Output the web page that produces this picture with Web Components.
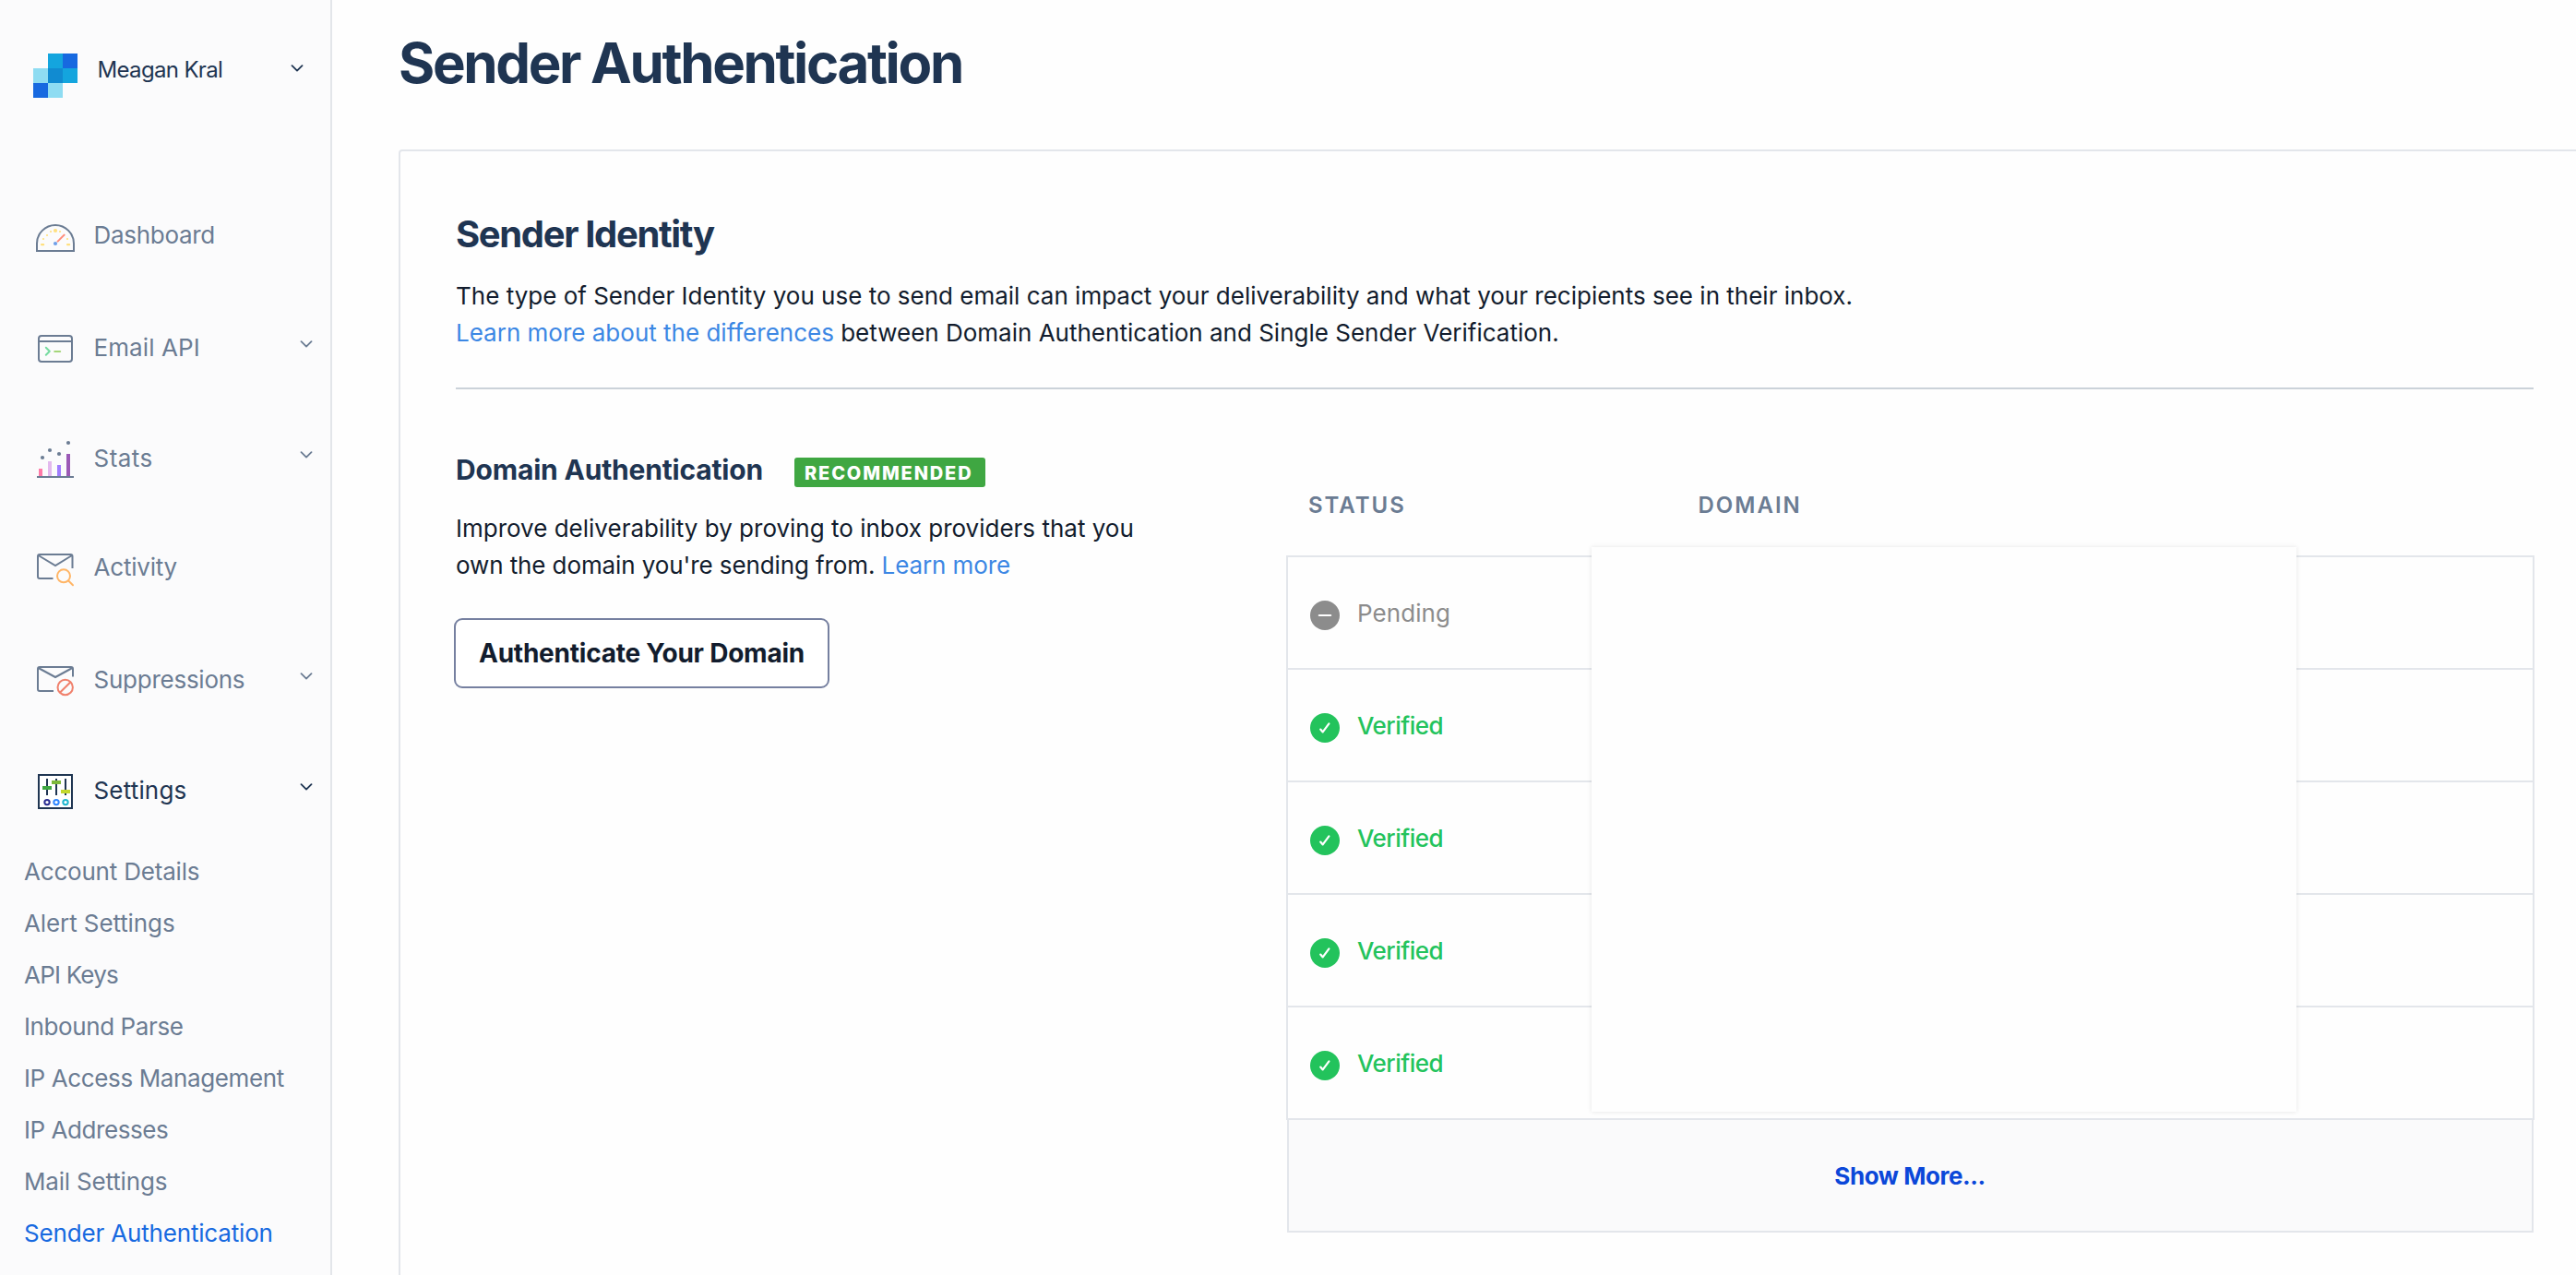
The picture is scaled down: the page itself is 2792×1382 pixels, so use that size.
<!DOCTYPE html>
<html lang="en">
<head>
  <meta charset="utf-8">
  <title>Sender Authentication</title>
  <style>
    body {
      margin: 0;
      font-family: Inter, "Liberation Sans", sans-serif;
      font-size: 26px;
      color: #121c2d;
      background: #fefefe;
    }
  </style>
</head>
<body>
<app-shell>
  <side-bar slot="sidebar" user="Meagan Kral">
    <nav-item icon="dashboard" tracking="-0.3">Dashboard</nav-item>
    <nav-item icon="email" tracking="0.1" expandable>Email API</nav-item>
    <nav-item icon="stats" tracking="0.45" expandable>Stats</nav-item>
    <nav-item icon="activity" tracking="-0.2">Activity</nav-item>
    <nav-item icon="suppressions" tracking="-0.25" expandable>Suppressions</nav-item>
    <nav-item icon="settings" tracking="0.17" expandable active>Settings</nav-item>
    <sub-link tracking="-0.2">Account Details</sub-link>
    <sub-link tracking="-0.1">Alert Settings</sub-link>
    <sub-link tracking="-0.8">API Keys</sub-link>
    <sub-link tracking="-0.4">Inbound Parse</sub-link>
    <sub-link tracking="-0.38">IP Access Management</sub-link>
    <sub-link tracking="-0.43">IP Addresses</sub-link>
    <sub-link tracking="-0.18">Mail Settings</sub-link>
    <sub-link tracking="-0.17" active>Sender Authentication</sub-link>
  </side-bar>
  <page-title>Sender Authentication</page-title>
  <identity-card heading="Sender Identity">
    <span slot="intro">The type of Sender Identity you use to send email can impact your deliverability and what your recipients see in their inbox.<br><text-link>Learn more about the differences</text-link> between Domain Authentication and Single Sender Verification.</span>
    <auth-section slot="details" heading="Domain Authentication" tag="Recommended">
      <span>Improve deliverability by proving to inbox providers that you</span>
      <span slot="second">own the domain you're sending from. <text-link>Learn more</text-link></span>
      <outline-button slot="action">Authenticate Your Domain</outline-button>
    </auth-section>
    <domain-table slot="table">
      <status-row state="pending">Pending</status-row>
      <status-row state="verified">Verified</status-row>
      <status-row state="verified">Verified</status-row>
      <status-row state="verified">Verified</status-row>
      <status-row state="verified">Verified</status-row>
      <span slot="more">Show More...</span>
    </domain-table>
  </identity-card>
</app-shell>

<script>
const CHEVRON = '<svg class="chevron" width="14" height="8" viewBox="0 0 14 8" fill="none" stroke="currentColor" stroke-width="1.8" stroke-linecap="round" stroke-linejoin="round"><path d="M1.5 1.2L7 6.6L12.5 1.2"/></svg>';

const NAV_ICONS = {
  dashboard: `
    <path d="M2 36V28A20 20 0 0 1 42 28V36Z" fill="none" stroke="#6b7c93" stroke-width="2"/>
    <g fill="#ffe07f">
      <circle cx="22" cy="14" r="2.1"/>
      <circle cx="17" cy="15" r="1.1"/><circle cx="27" cy="15" r="1.1"/>
      <circle cx="13" cy="19" r="1.1"/><circle cx="9" cy="23" r="1.1"/><circle cx="35" cy="23" r="1.1"/>
      <rect x="6" y="28" width="4.2" height="2.2" rx="1"/><rect x="34" y="28" width="4.2" height="2.2" rx="1"/>
    </g>
    <path d="M24.6 25.6L31.6 18.6" stroke="#ff8d7a" stroke-width="2" stroke-linecap="round"/>
    <circle cx="22" cy="28" r="2.1" fill="#6f9fe8"/>`,
  email: `
    <g fill="none" stroke-width="2">
      <rect x="4" y="8" width="36" height="28" rx="3" stroke="#6b7c93"/>
      <path d="M4 14H40" stroke="#6b7c93"/>
      <path d="M11.8 20.8L15.8 24.8L11.8 28.8" stroke="#76dba0" stroke-linecap="round" stroke-linejoin="round"/>
      <path d="M21.2 25H27.2" stroke="#a5d67a" stroke-linecap="round"/>
    </g>`,
  stats: `
    <rect x="4" y="32" width="4" height="8" fill="#ff7aa8"/>
    <rect x="14" y="24" width="4" height="16" fill="#e3b9ee"/>
    <rect x="24" y="28" width="4" height="12" fill="#a07dff"/>
    <rect x="34" y="16" width="4" height="24" fill="#9b59b6"/>
    <g fill="#6b7c93">
      <rect x="2" y="40" width="40" height="2"/>
      <circle cx="8" cy="20" r="2.1"/><circle cx="16" cy="12" r="2.1"/>
      <circle cx="26" cy="16" r="2.1"/><circle cx="36" cy="4" r="2.1"/>
    </g>`,
  activity: `
    <g fill="none" stroke-width="2">
      <path d="M19.5 31H5a2 2 0 0 1-2-2V7a2 2 0 0 1 2-2H38.5a2 2 0 0 1 2 2V20M3.6 6L22 17L40 6" stroke="#6b7c93"/>
      <g stroke="#ffb566"><circle cx="31" cy="28.3" r="7"/><path d="M36.2 33.5L41 38.2" stroke-linecap="round"/></g>
    </g>`,
  suppressions: `
    <g fill="none" stroke-width="2">
      <path d="M20 33H5a2 2 0 0 1-2-2V9a2 2 0 0 1 2-2H39a2 2 0 0 1 2 2V17.5M3.6 8L22 18L40.4 8" stroke="#6b7c93"/>
      <g stroke="#f0806c"><circle cx="32.7" cy="29" r="8.2"/><path d="M26.9 34.8L38.5 23.2"/></g>
    </g>`,
  settings: `
    <rect x="4" y="4" width="36" height="36" fill="#fff" stroke="#1f3552" stroke-width="2"/>
    <path d="M13 8V26M23 8V26M33 8V26" stroke="#1f3552" stroke-width="2"/>
    <rect x="8" y="16" width="10" height="4" fill="#3fa742"/>
    <rect x="18" y="10" width="10" height="4" fill="#7cb83a"/>
    <rect x="28" y="20" width="10" height="4" fill="#c3d82d"/>
    <g fill="none" stroke-width="2">
      <circle cx="13" cy="33.6" r="2.7" stroke="#2c2f92"/>
      <circle cx="23" cy="33.6" r="2.7" stroke="#2f86ff"/>
      <circle cx="33" cy="33.6" r="2.7" stroke="#1fb6cf"/>
    </g>`,
};

const STATUS_ICONS = {
  pending: '<circle cx="16" cy="16" r="16" fill="#8c8c8c"/><path d="M9.8 16H22.2" stroke="#fff" stroke-width="2.2" stroke-linecap="round"/>',
  verified: '<circle cx="16" cy="16" r="16" fill="#23c35c"/><path d="M11.2 17.6L13.7 20.4L20.4 11.4" fill="none" stroke="#fff" stroke-width="2.2" stroke-linecap="round" stroke-linejoin="round"/>',
};

class BaseElement extends HTMLElement {
  constructor() {
    super();
    this.attachShadow({ mode: 'open' });
  }

  connectedCallback() {
    this.shadowRoot.innerHTML = this.render();
  }
}

class AppShell extends BaseElement {
  render() {
    return `
      <style>
        :host {
          display: flex;
          height: 1382px;
          overflow: hidden;
        }
        main {
          flex: 1;
          min-width: 0;
          display: flex;
          flex-direction: column;
          padding: 32px 0 0 72px;
        }
      </style>
      <slot name="sidebar"></slot>
      <main><slot></slot></main>`;
  }
}

class SideBar extends BaseElement {
  render() {
    return `
      <style>
        :host {
          display: block;
          box-sizing: border-box;
          width: 360px;
          flex-shrink: 0;
          background: #fbfbfc;
          border-right: 2px solid #e3e6ea;
        }
        header {
          display: flex;
          align-items: flex-start;
          height: 140px;
          padding: 58px 29px 0 36px;
          color: #1f3552;
        }
        .name {
          flex: 1;
          margin-left: 21.5px;
          font-size: 24px;
          line-height: 35px;
          letter-spacing: -0.66px;
        }
        .chevron {
          margin-top: 12px;
        }
      </style>
      <header>
        <svg width="48" height="48" viewBox="0 0 48 48" shape-rendering="crispEdges">
          <path d="M0 16H16V32H0ZM16 32H32V48H16Z" fill="#8edcf2"/>
          <path d="M16 0H32V16H16ZM32 16H48V32H32Z" fill="#14a5de"/>
          <path d="M32 0H48V16H32ZM0 32H16V48H0Z" fill="#1769e0"/>
          <path d="M16 16H32V32H16Z" fill="#118bd1"/>
        </svg>
        <span class="name">${this.getAttribute('user')}</span>
        ${CHEVRON}
      </header>
      <nav><slot></slot></nav>`;
  }
}

class NavItem extends BaseElement {
  render() {
    return `
      <style>
        :host {
          display: flex;
          align-items: center;
          height: 120px;
          padding: 0 19px 0 38px;
          color: #6b7c93;
        }
        :host([active]) {
          color: #1f3552;
        }
        .label {
          flex: 1;
          margin-left: 19.5px;
          line-height: 31px;
          padding-bottom: 7px;
          letter-spacing: ${this.getAttribute('tracking')}px;
        }
        :host([expandable]) .label {
          padding-bottom: 3px;
        }
        .chevron {
          margin-bottom: 11px;
        }
      </style>
      <svg width="44" height="44" viewBox="0 0 44 44">${NAV_ICONS[this.getAttribute('icon')]}</svg>
      <span class="label"><slot></slot></span>
      ${this.hasAttribute('expandable') ? CHEVRON : ''}`;
  }
}

class SubLink extends BaseElement {
  render() {
    return `
      <style>
        :host {
          display: block;
          padding-left: 26px;
          margin-bottom: 3px;
          line-height: 53px;
          color: #6b7c93;
          letter-spacing: ${this.getAttribute('tracking')}px;
        }
        :host([active]) {
          color: #1769e0;
        }
      </style>
      <slot></slot>`;
  }
}

class PageTitle extends BaseElement {
  render() {
    return `
      <style>
        :host {
          display: block;
          margin-bottom: 58px;
        }
        h1 {
          margin: 0;
          font-size: 60px;
          font-weight: 700;
          line-height: 72px;
          letter-spacing: -2.37px;
          color: #1f3552;
        }
      </style>
      <h1><slot></slot></h1>`;
  }
}

class TextLink extends BaseElement {
  render() {
    return `
      <style>
        :host {
          color: #3c87e4;
          cursor: pointer;
        }
      </style>
      <slot></slot>`;
  }
}

class IdentityCard extends BaseElement {
  render() {
    return `
      <style>
        :host {
          display: block;
          flex: 1;
          box-sizing: border-box;
          margin-right: -17px;
          padding: 65px 60px 0;
          border: 2px solid #e3e6eb;
          border-bottom: 0;
          border-radius: 4px 4px 0 0;
        }
        h2 {
          margin: 0 0 23px;
          font-size: 40px;
          font-weight: 700;
          line-height: 49px;
          letter-spacing: -1.36px;
          color: #1f3552;
        }
        p {
          margin: 0 0 39px;
          line-height: 40px;
        }
        hr {
          margin: 0 1px 0 0;
          border: 0;
          height: 2px;
          background: #cbd2d9;
        }
        .columns {
          display: grid;
          grid-template-columns: 1fr 1353px;
        }
      </style>
      <h2>${this.getAttribute('heading')}</h2>
      <p><slot name="intro"></slot></p>
      <hr>
      <div class="columns">
        <slot name="details"></slot>
        <slot name="table"></slot>
      </div>`;
  }
}

class AuthSection extends BaseElement {
  render() {
    return `
      <style>
        :host {
          display: block;
          padding-top: 69px;
        }
        .title {
          display: flex;
          align-items: flex-start;
          height: 36px;
          margin-bottom: 26px;
        }
        h3 {
          margin: 0;
          width: 367px;
          font-size: 30px;
          font-weight: 700;
          line-height: 36px;
          letter-spacing: -0.18px;
          color: #1f3552;
        }
        .tag {
          box-sizing: border-box;
          width: 207px;
          height: 32px;
          margin-top: 5px;
          padding: 1px 0 0 11px;
          border-radius: 3px;
          background: #3fa742;
          color: #fff;
          font-size: 20px;
          font-weight: 800;
          line-height: 32px;
          letter-spacing: 1.85px;
          text-transform: uppercase;
        }
        .text {
          margin-bottom: 37px;
          line-height: 40px;
        }
        .text div + div {
          letter-spacing: -0.1px;
        }
      </style>
      <div class="title">
        <h3>${this.getAttribute('heading')}</h3>
        <span class="tag">${this.getAttribute('tag')}</span>
      </div>
      <div class="text">
        <div><slot></slot></div>
        <div><slot name="second"></slot></div>
      </div>
      <slot name="action"></slot>`;
  }
}

class OutlineButton extends BaseElement {
  render() {
    return `
      <style>
        :host {
          display: block;
          margin-left: -2px;
        }
        button {
          display: block;
          box-sizing: border-box;
          width: 407px;
          height: 76px;
          padding: 0;
          border: 2px solid #7680a0;
          border-radius: 9px;
          background: #fff;
          color: #121c2d;
          font: 700 28px Inter, sans-serif;
          letter-spacing: -0.23px;
        }
      </style>
      <button><slot></slot></button>`;
  }
}

class DomainTable extends BaseElement {
  render() {
    return `
      <style>
        :host {
          display: block;
          position: relative;
          padding-top: 111px;
        }
        .head {
          display: grid;
          grid-template-columns: 422.5px 1fr;
          padding-left: 24px;
          margin-bottom: 40px;
          font-size: 24px;
          font-weight: 600;
          line-height: 29px;
          letter-spacing: 2px;
          color: #6b7c93;
        }
        .rows {
          border: 2px solid #e3e6eb;
          border-bottom: 0;
        }
        .more {
          display: flex;
          align-items: center;
          justify-content: center;
          height: 120px;
          margin: 0 1px;
          padding-right: 1px;
          border: 2px solid #e3e6eb;
          border-top: 0;
          background: #fafafb;
          color: #0b47d9;
          font-weight: 700;
          letter-spacing: -0.45px;
        }
        /* blank panel that hides the domain names */
        .cover {
          position: absolute;
          left: 331px;
          top: 171px;
          width: 764px;
          height: 612px;
          background: #fefefe;
          box-shadow: 0 0 5px rgba(0, 0, 0, 0.1);
        }
      </style>
      <div class="head"><span>STATUS</span><span>DOMAIN</span></div>
      <div class="rows"><slot></slot></div>
      <div class="more"><slot name="more"></slot></div>
      <div class="cover"></div>`;
  }
}

class StatusRow extends BaseElement {
  render() {
    return `
      <style>
        :host {
          display: flex;
          align-items: center;
          height: 120px;
          padding-left: 23.5px;
          border-bottom: 2px solid #e3e6eb;
          color: #8c8c8c;
          letter-spacing: 0.07px;
        }
        :host([state="verified"]) {
          color: #23c35c;
          font-weight: 500;
          letter-spacing: -0.5px;
        }
        svg {
          margin: 5px 19.5px 0 0;
        }
        span {
          line-height: 32px;
          padding-top: 1px;
        }
      </style>
      <svg width="32" height="32" viewBox="0 0 32 32">${STATUS_ICONS[this.getAttribute('state')]}</svg>
      <span><slot></slot></span>`;
  }
}

customElements.define('app-shell', AppShell);
customElements.define('side-bar', SideBar);
customElements.define('nav-item', NavItem);
customElements.define('sub-link', SubLink);
customElements.define('page-title', PageTitle);
customElements.define('text-link', TextLink);
customElements.define('identity-card', IdentityCard);
customElements.define('auth-section', AuthSection);
customElements.define('outline-button', OutlineButton);
customElements.define('domain-table', DomainTable);
customElements.define('status-row', StatusRow);
</script>
</body>
</html>
